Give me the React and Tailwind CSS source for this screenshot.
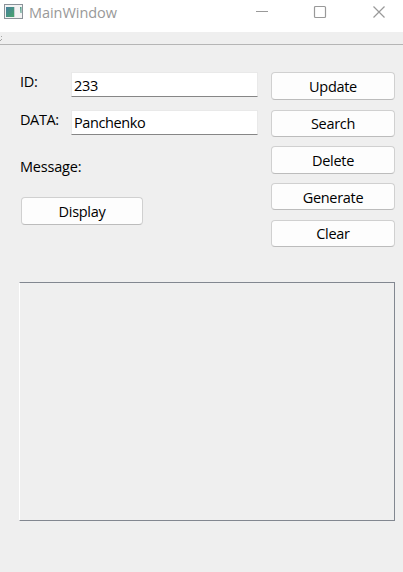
const font = "font-['Open_Sans','Noto_Sans',sans-serif]";

function Button({ children, className = "", pad = "pt-px" }) {
  return (
    <button
      className={`flex w-full shrink-0 items-center justify-center rounded-[4px] border border-[#d0d0d0] border-b-[#bcbcbc] bg-[#fdfdfd] leading-5 ${pad} ${className}`}
    >
      {children}
    </button>
  );
}

function Field({ label, value, className = "", leading = "leading-[25px]" }) {
  return (
    <div className={`flex h-[25px] ${className}`}>
      <label className="w-[51px] shrink-0 leading-[20px]">{label}</label>
      <div className={`w-[187px] border border-[#e9e9e9] border-b-[#868686] bg-white pl-[2px] ${leading}`}>
        {value}
      </div>
    </div>
  );
}

function TitleBar() {
  return (
    <header className="flex h-8 shrink-0 bg-white">
      <svg className="ml-1 mt-1 shrink-0" width="19" height="15" viewBox="0 0 19 15">
        <defs>
          <linearGradient id="pane" x1="0" y1="0" x2="1" y2="1">
            <stop offset="0" stopColor="#477f9e" />
            <stop offset="1" stopColor="#48a46b" />
          </linearGradient>
        </defs>
        <rect x="0.5" y="0.5" width="18" height="14" fill="#f3f3f3" stroke="#8b9299" />
        <rect x="2" y="3" width="8" height="10" fill="url(#pane)" />
        <rect x="10" y="3" width="1" height="10" fill="#c9cfd2" />
        <path d="M16 3h1.5v6h-1z" fill="#4d9a86" />
      </svg>
      <span className="ml-[6px] w-[96px] text-[14.5px] leading-[25px] tracking-[-0.05px] text-[#999]">MainWindow</span>
      <svg className="ml-auto mr-[17px] mt-[5px] shrink-0" width="130" height="14" viewBox="0 0 130 14" fill="none" stroke="#999">
        <path d="M0 6.5h12" />
        <rect x="58.5" y="1.5" width="11" height="11" rx="1" strokeWidth="1.2" />
        <path d="M117.5 1.5l11 11M128.5 1.5l-11 11" strokeWidth="1.2" />
      </svg>
    </header>
  );
}

export default function App() {
  return (
    <div className={`flex h-[572px] w-[403px] flex-col overflow-hidden bg-[#efefef] text-[14.5px] tracking-[-0.3px] text-black ${font}`}>
      <TitleBar />
      <div className="flex h-[13px] shrink-0 border-b border-[#b5b5b5]">
        <svg width="4" height="12" viewBox="0 0 4 12" fill="#a5a5a5">
          <path d="M1 4h1v1H1zM0 8h1v1H0zM1 7h1v1H1z" />
        </svg>
      </div>
      <main className="flex flex-col pl-[19px] pr-2 pt-[27px]">
        <div className="flex h-[210px] justify-between">
          <section className="flex w-[240px] flex-col">
            <Field label="ID:" value="233" className="pl-px" />
            <Field label="DATA:" value="Panchenko" className="mt-[13px] pl-px tracking-[-0.4px]" leading="leading-[23px]" />
            <p className="mt-[22px] h-5 pl-px leading-5 tracking-[-0.2px]">Message:</p>
            <div className="ml-[2px] mt-5 w-[122px]">
              <Button className="h-7">Display</Button>
            </div>
          </section>
          <section className="flex w-[124px] flex-col">
            <Button className="h-7">Update</Button>
            <Button className="mt-[10px] h-[27px]">Search</Button>
            <Button className="mt-[9px] h-7">Delete</Button>
            <Button className="mt-[9px] h-[27px]" pad="pt-[3px]">Generate</Button>
            <Button className="mt-[10px] h-[27px]">Clear</Button>
          </section>
        </div>
        <div className="h-[239px] border border-[#828790] border-l-white" />
      </main>
    </div>
  );
}
